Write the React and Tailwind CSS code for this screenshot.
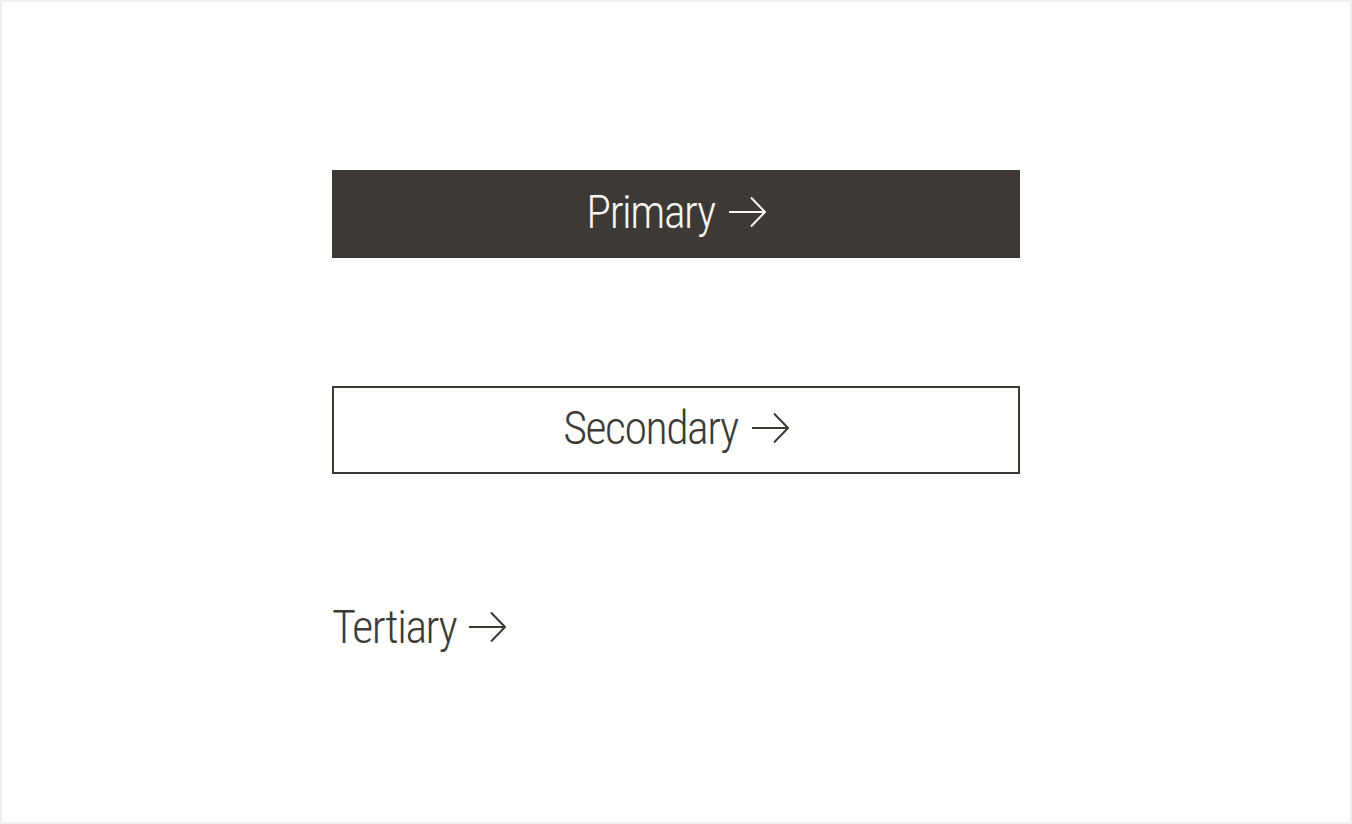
function Arrow({ className }) {
  return (
    <svg width="37" height="32" viewBox="0 0 37 32" fill="none" stroke="currentColor" strokeWidth="2" strokeLinecap="butt" strokeLinejoin="miter" className={className}>
      <path d="M0 16H35.5" />
      <path d="M22 1.5L36 16L22 30.5" />
    </svg>
  );
}

export default function App() {
  const font = "font-['Roboto_Condensed',Roboto,'Liberation_Sans',sans-serif] font-light text-[46px] leading-none tracking-[-1.5px]";
  return (
    <div className="w-[1352px] h-[824px] border-2 border-[#efefef] bg-white">
      <div className="w-[688px] mx-auto pt-[168px] flex flex-col">
        <button className={`h-[88px] w-full bg-[#3d3a35] text-[#f7f6f4] flex items-center justify-center gap-[14px] pb-[4px] ${font}`}>
          <span>Primary</span>
          <Arrow />
        </button>
        <button className={`mt-[128px] h-[88px] w-full border-2 border-[#3d3a35] text-[#3d3a35] flex items-center justify-center gap-[14px] pb-[4px] ${font}`}>
          <span>Secondary</span>
          <Arrow />
        </button>
        <div className={`mt-[130px] flex items-center gap-[13px] text-[#3d3a35] ${font}`}>
          <span>Tertiary</span>
          <Arrow />
        </div>
      </div>
    </div>
  );
}
